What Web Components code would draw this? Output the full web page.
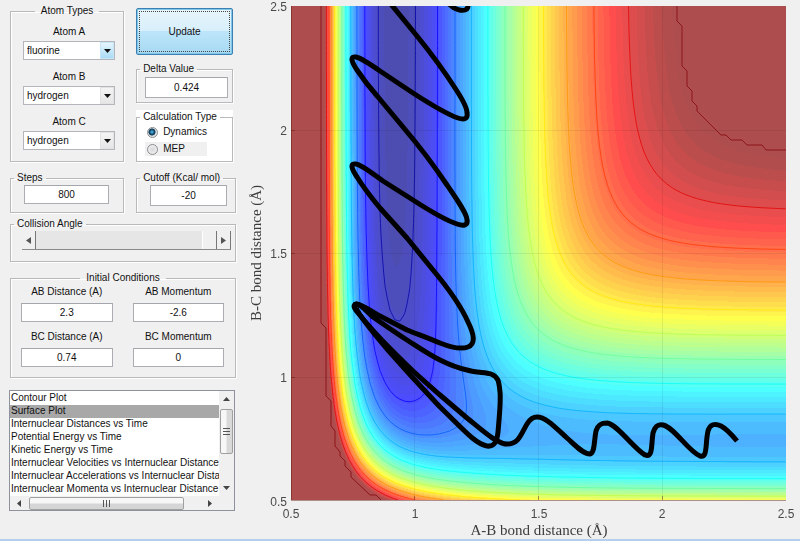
<!DOCTYPE html>
<html lang="en">
<head>
<meta charset="utf-8">
<title>Reaction dynamics</title>
<style>
html { height: 100%; }
body { margin: 0; min-height: 100%; display: flex; background: #f0f0f0; color: #111; font: 10px/14px "Liberation Sans", Arial, sans-serif; }
</style>
</head>
<body>
<dynamics-app></dynamics-app>
<script>
const define = (name, html, setup) => {
  const t = document.createElement('template');
  t.innerHTML = '<style>*{box-sizing:border-box}input,select,button{font:inherit;color:inherit;margin:0;outline:0}</style>' + html;
  customElements.define(name, class extends HTMLElement {
    constructor() {
      super();
      this.attachShadow({ mode: 'open' }).append(t.content.cloneNode(true));
    }
    connectedCallback() { if (setup) setup(this, this.shadowRoot); }
  });
};

define('group-box', `<style>
:host { display: block; min-width: 0; }
fieldset { height: 100%; min-width: 0; margin: 0; padding: 0; border: 1px solid #b9b9bb; box-shadow: 1px 1px #fff, inset 1px 1px #fff; }
legend { margin-left: 3px; padding: 0 3px; line-height: 14px; white-space: nowrap; }
:host([centered]) legend { margin: 0 auto; padding: 0 6px; }
</style><fieldset><legend></legend><slot></slot></fieldset>`,
(el, r) => { r.querySelector('legend').textContent = el.getAttribute('label'); });

define('number-field', `<style>
:host { display: grid; gap: 4px; min-width: 0; text-align: center; }
label { white-space: nowrap; }
label[hidden] { display: none; }
input { width: 100%; height: 19px; padding: 0; border: 1px solid #abadb3; border-top-color: #a4a6ad; background: #fff; text-align: center; }
:host([tall]) input { height: 21px; }
</style><label for="f"></label><input id="f" type="text">`,
(el, r) => {
  const l = r.querySelector('label'), i = r.querySelector('input');
  if (el.hasAttribute('bare')) { l.hidden = true; i.setAttribute('aria-label', el.getAttribute('label')); }
  l.textContent = el.getAttribute('label');
  i.value = el.getAttribute('value');
});

define('atom-select', `<style>
:host { display: grid; gap: 2px; text-align: center; }
.box { display: grid; grid-template-columns: 1fr 14px; height: 19px; border: 1px solid #b4b6bc; background: #fff; }
select { grid-area: 1 / 1 / 2 / 3; appearance: none; border: 0; padding: 0 0 0 3px; background: transparent; min-width: 0; }
.arrow { grid-area: 1 / 2; display: grid; place-items: center; pointer-events: none; background: linear-gradient(#f4f4f4, #e6e6e6); border: 1px solid #e2e2e2; }
:host([hot]) .arrow { background: linear-gradient(#e6f5fd, #a9dcf6); border-color: #c6e6f7; }
</style><label for="s"></label><div class="box"><select id="s"></select><span class="arrow"><svg width="7" height="4"><path d="M0 0H7L3.5 4Z" fill="#111"/></svg></span></div>`,
(el, r) => {
  r.querySelector('label').textContent = el.getAttribute('label');
  const s = r.querySelector('select');
  s.add(new Option(el.getAttribute('value')));
});

define('update-button', `<style>
:host { display: block; }
button { width: 100%; height: 47px; padding: 2px; border: 1px solid #3c7fb1; border-radius: 2px; background: linear-gradient(#e9f5fc 0, #d7effb 49%, #bde5fa 50%, #a6d9f2 100%); box-shadow: inset 0 0 0 1px #7fc8ec; }
span { display: grid; place-items: center; height: 100%; border: 1px dotted #444; }
</style><button type="button"><span><slot></slot></span></button>`);

define('calc-type', `<style>
:host { display: grid; gap: 3px; padding: 1px 8px 5px; }
label { display: flex; align-items: center; gap: 5px; height: 14px; padding-left: 2px; }
label + label { background: #f0f0f0; margin-right: 17px; }
input { appearance: none; width: 11px; height: 11px; border: 1px solid #8a8d90; border-radius: 50%; background: radial-gradient(#d8d8d8, #f6f6f6); }
input:checked { background: radial-gradient(circle at 4px 4px, #5cc4ee 0, #15557c 30%, #10364f 45%, #dfe3e6 55%); }
</style><label><input type="radio" name="t" checked>Dynamics</label><label><input type="radio" name="t">MEP</label>`);

define('angle-slider', `<style>
:host { display: grid; grid-template-columns: 14px 1fr 14px; height: 19px; border-bottom: 1px solid #8a8a8a; background: #e6e6e6; }
button { display: grid; place-items: center; padding: 0; background: #f0f0f0; border: 0; border-right: 1px solid #777; }
input { appearance: none; width: 100%; min-width: 0; height: 100%; background: #e6e6e6; }
input::-webkit-slider-thumb { appearance: none; width: 15px; height: 18px; background: #f0f0f0; border-left: 1px solid #fff; border-right: 1px solid #777; }
</style><button type="button" aria-label="Decrease"><svg width="5" height="7"><path d="M5 0V7L0 3.5Z" fill="#555"/></svg></button><input type="range" aria-label="Collision Angle" min="0" max="180" value="180"><button type="button" aria-label="Increase"><svg width="5" height="7"><path d="M0 0V7L5 3.5Z" fill="#555"/></svg></button>`);

define('plot-list', `<style>
:host { display: grid; grid-template: 105px 14px / 1fr 15px; border: 1px solid #8e929c; background: #f0f0f0; }
.view { overflow: hidden; background: #fff; padding-top: 1px; }
select { display: block; width: 100%; height: 104px; border: 0; border-radius: 0; padding: 0; background: #fff; overflow: hidden; scrollbar-width: none; }
option { height: 13px; min-height: 13px; line-height: 13px; padding: 0 1px; color: #111; white-space: nowrap; overflow: hidden; }
option:checked { background: #a8a8a8 linear-gradient(#a8a8a8, #a8a8a8); color: #111; }
.v, .h { display: flex; align-items: center; justify-content: space-between; }
.v { flex-direction: column; padding: 6px 1px; }
.h { padding: 0 7px; }
.t { display: grid; place-items: center; border: 1px solid #a0a0a0; border-radius: 2px; }
.v .t { width: 13px; height: 45px; margin-bottom: 24px; background: linear-gradient(90deg, #f7f7f7 45%, #d9d9d9 55%); }
.h .t { height: 13px; flex: 1; margin: 0 24px 0 8px; background: linear-gradient(#f7f7f7 45%, #d5d5d5 55%); }
</style><div class="view"><select size="8" aria-label="Plot type"><option>Contour Plot<option selected>Surface Plot<option>Internuclear Distances vs Time<option>Potential Energy vs Time<option>Kinetic Energy vs Time<option>Internuclear Velocities vs Internuclear Distance<option>Internuclear Accelerations vs Internuclear Distance<option>Internuclear Momenta vs Internuclear Distance</select></div>
<div class="v"><svg width="7" height="4"><path d="M0 4H7L3.5 0Z" fill="#444"/></svg><span class="t"><svg width="7" height="8"><path d="M0 .5H7M0 3.5H7M0 6.5H7" stroke="#555"/></svg></span><svg width="7" height="4"><path d="M0 0H7L3.5 4Z" fill="#444"/></svg></div>
<div class="h"><svg width="4" height="7"><path d="M4 0V7L0 3.5Z" fill="#444"/></svg><span class="t"><svg width="8" height="7"><path d="M.5 0V7M3.5 0V7M6.5 0V7" stroke="#555"/></svg></span><svg width="4" height="7"><path d="M0 0V7L4 3.5Z" fill="#444"/></svg></div>`);

define('control-panel', `<style>
:host { display: block; padding: 4px 4px 0 10px; }
.pair { display: grid; grid-template-columns: 8fr 7fr; gap: 12px; }
.side { display: flex; flex-direction: column; gap: 7px; padding: 4px 3px 0 0; }
.atoms { display: grid; gap: 10px; padding: 7px 8px 10px 12px; }
.delta { padding: 1px 4px 4px 8px; }
.white { background: #fff; flex: 1; }
.row2 { margin-top: 9px; }
.steps { padding: 0 14px 6px 13px; }
.cut { padding: 0 8px 6px 13px; }
.angle { margin-top: 4px; }
.angle angle-slider { margin: 0 4px 11px 11px; }
.initial { margin-top: 9px; }
.fields { display: grid; grid-template-columns: 1fr 1fr; gap: 8px 20px; padding: 0 11px 10px 10px; }
plot-list { margin: 12px 1px 0 -1px; }
</style>
<div class="pair">
  <group-box centered label="Atom Types"><div class="atoms">
    <atom-select hot label="Atom A" value="fluorine"></atom-select>
    <atom-select label="Atom B" value="hydrogen"></atom-select>
    <atom-select label="Atom C" value="hydrogen"></atom-select>
  </div></group-box>
  <div class="side">
    <update-button>Update</update-button>
    <group-box label="Delta Value"><div class="delta"><number-field bare tall label="Delta Value" value="0.424"></number-field></div></group-box>
    <group-box class="white" label="Calculation Type"><calc-type></calc-type></group-box>
  </div>
</div>
<div class="pair row2">
  <group-box label="Steps"><div class="steps"><number-field bare label="Steps" value="800"></number-field></div></group-box>
  <group-box label="Cutoff (Kcal/ mol)"><div class="cut"><number-field bare tall label="Cutoff (Kcal/ mol)" value="-20"></number-field></div></group-box>
</div>
<group-box class="angle" label="Collision Angle"><angle-slider></angle-slider></group-box>
<group-box class="initial" centered label="Initial Conditions"><div class="fields">
  <number-field label="AB Distance (A)" value="2.3"></number-field>
  <number-field label="AB Momentum" value="-2.6"></number-field>
  <number-field label="BC Distance (A)" value="0.74"></number-field>
  <number-field label="BC Momentum" value="0"></number-field>
</div></group-box>
<plot-list></plot-list>`);

/* Collinear LEPS energy in kcal/mol for F-H-H; distances in angstrom. */
const CAP = -20, FLOOR = -141.4;
const pair = (D, b, r0, S, r) => {
  const e = Math.exp(-b * (r - r0));
  const s = D * (e * e - 2 * e) * (1 + S), t = D / 2 * (e * e + 2 * e) * (1 - S);
  return [(s + t) / 2 / (1 + S), (s - t) / 2 / (1 + S)];
};
const energy = (x, y) => {
  const [q1, j1] = pair(141.3627, 2.2714, 0.9213, 0.1712, x);
  const [q2, j2] = pair(109.5762, 1.9979, 0.7417, 0.173, y);
  const [q3, j3] = pair(141.3627, 2.2714, 0.9213, 0.2294, x + y);
  return q1 + q2 + q3 - Math.sqrt(((j1 - j2) ** 2 + (j2 - j3) ** 2 + (j3 - j1) ** 2) / 2);
};
const jet = (f, alpha) => {
  const ch = c => {
    const v = Math.max(0, Math.min(1, 1.5 - Math.abs(4 * Math.min(f, 0.99) - c)));
    return Math.round(255 * (1 - alpha + alpha * v));
  };
  return [ch(3), ch(2), ch(1)];
};
const X0 = 51, Y1 = 500, W = 495, H = 494, UNIT = 247.3;

/* Straight pieces of one level line, by marching squares over the grid. */
const levelPath = (level) => {
  const n = 100, step = 0.02, d = [];
  const P = (x, y) => (X0 + (x - 0.5) * UNIT).toFixed(1) + ' ' + (Y1 - (y - 0.5) * 247).toFixed(1);
  for (let i = 0; i < n; i++) for (let k = 0; k < n; k++) {
    const c = [[0, 0], [1, 0], [1, 1], [0, 1]].map(([a, b]) => {
      const x = 0.5 + (i + a) * step, y = 0.5 + (k + b) * step;
      return [x, y, energy(x, y) - level];
    });
    const hits = [];
    for (let m = 0; m < 4; m++) {
      const a = c[m], b = c[(m + 1) % 4];
      if ((a[2] < 0) !== (b[2] < 0)) {
        const t = a[2] / (a[2] - b[2]);
        hits.push(P(a[0] + t * (b[0] - a[0]), a[1] + t * (b[1] - a[1])));
      }
    }
    if (hits.length > 1) d.push('M' + hits[0] + 'L' + hits[1]);
  }
  return d.join('');
};

define('surface-plot', `<style>
:host { display: block; min-width: 0; }
svg { display: block; width: 100%; height: auto; }
canvas { display: block; width: 495px; height: 494px; }
.tick { font: 12px "Liberation Sans", Arial, sans-serif; fill: #4a4a4a; }
.name { font: 15px "Liberation Serif", "Times New Roman", serif; fill: #3c3c3c; text-anchor: middle; }
.end { text-anchor: end; } .mid { text-anchor: middle; }
</style>
<svg viewBox="0 0 560 539" role="img" aria-label="Potential energy surface">
<defs><clipPath id="c"><rect x="51" y="6" width="495" height="494"/></clipPath></defs>
<foreignObject x="51" y="6" width="495" height="494"><canvas width="495" height="494"></canvas></foreignObject>
<g clip-path="url(#c)"><g id="lines" fill="none"></g>
<path d="M174.5 6V500M298.5 6V500M422.5 6V500M51 130.5H546M51 253.5H546M51 377.5H546" stroke="#000" stroke-opacity=".07" fill="none"/>
<g fill="none" stroke="#8b1518">
<path d="M81 6V323L86 328V396L91 401V426L95 431V446L100 452V456L105 461V466L111 472V477L130 495H136L141 500"/>
<path d="M437 6V21L442 26V66L447 71V86L452 91V101L457 106V111L481 135H486L491 140H502L507 145H522L526 150H546"/></g>
<g transform="translate(-240 0)" fill="none" stroke="#000" stroke-width="5" stroke-linejoin="round">
<path d="M449 4C455 10 462 11 465 10C468 9 468 7 468 4"/>
<path d="M390 3L417 36C430 52 446 74 455 88C463 100 467 108 467 113C468 119 464 120 458 118C446 114 430 104 413 93L380 71C370 64 361 58 356 57C350 56 351 61 357 70C361 76 370 88 378 97L403 127C420 147 435 167 447 185C458 201 467 214 467 220C468 226 463 226 457 224C445 220 430 211 413 200L383 181C373 174 362 165 356 164C350 163 351 168 357 177C362 185 370 196 380 208L407 238L433 270C448 288 461 306 468 322C474 334 476 344 468 347C460 350 450 347 440 343C428 338 417 334 407 330L378 315C370 310 361 304 356 304C352 305 355 310 359 314C370 328 392 351 413 371C425 382 432 388 440 395L467 418C482 430 497 444 507 444C519 444 521 434 527 424C530 419 533 417 537 417C546 417 556 428 567 438C575 445 583 454 590 454C595 453 594 440 596 431C598 424 602 423 607 423C617 424 633 448 645 455C653 458 651 446 653 433C655 426 658 424 663 425C675 428 688 451 700 456C708 458 705 444 708 431C710 424 715 423 721 426C727 429 732 435 737 441"/>
<path d="M356 304C361 304 365 310 373 317C383 324 396 333 407 340C418 347 428 354 440 360C450 365 458 368 467 370C477 373 485 372 491 374C499 377 499 383 500 392C501 402 499 420 498 432C497 442 494 447 487 446C475 444 462 428 440 407L413 378L387 349C375 335 362 320 356 308"/>
</g></g>
<path d="M51.5 6V500.5H546M174.5 500V496M298.5 500V496M422.5 500V496M51 377.5H55M51 253.5H55M51 130.5H55" stroke="#5a1a10" stroke-opacity=".45" fill="none"/>
<g class="tick"><g class="end"><text x="47" y="11">2.5</text><text x="47" y="135">2</text><text x="47" y="258">1.5</text><text x="47" y="382">1</text><text x="47" y="506">0.5</text></g>
<g class="mid"><text x="51" y="518">0.5</text><text x="175" y="518">1</text><text x="299" y="518">1.5</text><text x="422" y="518">2</text><text x="546" y="518">2.5</text></g></g>
<text class="name" x="299" y="535">A-B bond distance (Å)</text>
<text class="name" transform="translate(21 253) rotate(-90)">B-C bond distance (Å)</text>
</svg>`,
(el, r) => {
  const ctx = r.querySelector('canvas').getContext('2d');
  const img = ctx.createImageData(W, H);
  for (let py = 0; py < H; py++) for (let px = 0; px < W; px++) {
    const v = Math.min(CAP, energy(0.5 + px / UNIT, 0.5 + (H - py) / 247));
    const band = Math.max(0, Math.min(63, Math.floor((v - FLOOR) / (CAP - FLOOR) * 64)));
    img.data.set([...jet((band + 1) / 64, 0.7), 255], (py * W + px) * 4);
  }
  ctx.putImageData(img, 0, 0);
  let lines = '';
  for (let k = 0; k < 11; k++) {
    const level = -137.16 + 10.572 * k;
    const c = jet((level - FLOOR) / (CAP - FLOOR), 1);
    lines += `<path d="${levelPath(level)}" stroke="rgb(${c})" stroke-opacity=".75"/>`;
  }
  r.querySelector('#lines').innerHTML = lines;
});

define('dynamics-app', `<style>
:host { flex: 1; display: grid; grid-template-columns: 30% 1fr; align-items: start; border-bottom: 2px solid #b4cfee; }
</style><control-panel></control-panel><surface-plot></surface-plot>`);
</script>
</body>
</html>
